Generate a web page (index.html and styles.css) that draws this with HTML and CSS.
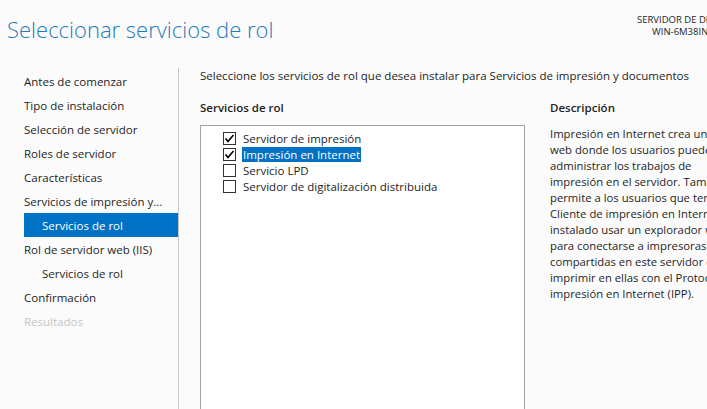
FILE: index.html
```html
<!DOCTYPE html>
<html lang="es">
<head>
<meta charset="utf-8">
<title>Seleccionar servicios de rol</title>
<link rel="stylesheet" href="styles.css">
</head>
<body>
<div class="window">
  <header class="header">
    <h1 class="title">Seleccionar servicios de rol</h1>
    <div class="server">
      <div class="server-label">SERVIDOR DE DESTINO</div>
      <div class="server-name">WIN-6M38IN</div>
    </div>
  </header>
  <div class="content">
    <nav class="sidebar">
      <ul class="steps">
        <li class="step">Antes de comenzar</li>
        <li class="step">Tipo de instalación</li>
        <li class="step">Selección de servidor</li>
        <li class="step">Roles de servidor</li>
        <li class="step">Características</li>
        <li class="step">Servicios de impresión y...</li>
        <li class="step sub active">Servicios de rol</li>
        <li class="step">Rol de servidor web (IIS)</li>
        <li class="step sub">Servicios de rol</li>
        <li class="step">Confirmación</li>
        <li class="step disabled">Resultados</li>
      </ul>
    </nav>
    <main class="main">
      <p class="intro">Seleccione los servicios de rol que desea instalar para Servicios de impresión y documentos</p>
      <div class="columns">
        <section class="roles">
          <h2 class="heading">Servicios de rol</h2>
          <div class="listbox">
            <div class="item">
              <span class="check checked"><svg viewBox="0 0 13 13" width="13" height="13"><path d="M2.5 6.5 L5 9.5 L10.5 3" fill="none" stroke="#000" stroke-width="1.6"/></svg></span>
              <span class="label">Servidor de impresión</span>
            </div>
            <div class="item">
              <span class="check checked"><svg viewBox="0 0 13 13" width="13" height="13"><path d="M2.5 6.5 L5 9.5 L10.5 3" fill="none" stroke="#000" stroke-width="1.6"/></svg></span>
              <span class="label selected">Impresión en Internet</span>
            </div>
            <div class="item">
              <span class="check"></span>
              <span class="label">Servicio LPD</span>
            </div>
            <div class="item">
              <span class="check"></span>
              <span class="label">Servidor de digitalización distribuida</span>
            </div>
          </div>
        </section>
        <section class="description">
          <h2 class="heading">Descripción</h2>
          <p class="desc-text">Impresión en Internet crea un sitio<br>web donde los usuarios pueden<br>administrar los trabajos de<br>impresión en el servidor. También<br>permite a los usuarios que tengan el<br>Cliente de impresión en Internet<br>instalado usar un explorador web<br>para conectarse a impresoras<br>compartidas en este servidor e<br>imprimir en ellas con el Protocolo de<br>impresión en Internet (IPP).</p>
        </section>
      </div>
    </main>
  </div>
</div>
</body>
</html>
```

FILE: styles.css
```css
* { box-sizing: border-box; }

html, body {
  margin: 0;
  padding: 0;
  background: #fbfbfb;
  overflow: hidden;
}

body {
  font-family: "Open Sans", "Noto Sans", "DejaVu Sans", sans-serif;
  font-size: 11.5px;
  color: #1e1e1e;
  width: 707px;
  height: 409px;
}

.window {
  width: 707px;
  height: 409px;
  overflow: hidden;
}

.header {
  height: 68px;
  display: flex;
  justify-content: space-between;
  align-items: flex-start;
}

.title {
  margin: 14px 0 0 7px;
  font-size: 22px;
  font-weight: 300;
  color: #1f7ab9;
  line-height: 30px;
  white-space: nowrap;
}

.server {
  margin-top: 14px;
  width: 70px;
  font-size: 9.5px;
  line-height: 12px;
  white-space: nowrap;
  color: #1e1e1e;
}

.server-name {
  padding-left: 15px;
}

.content {
  display: flex;
  height: 341px;
}

.sidebar {
  width: 179px;
  flex: none;
  border-right: 1px solid #c6c6c6;
  padding: 1px 0 0 24px;
}

.steps {
  list-style: none;
  margin: 0;
  padding: 0;
}

.step {
  height: 24px;
  padding-top: 3px;
  line-height: 20px;
  white-space: nowrap;
  color: #1e1e1e;
}

.step.sub {
  padding-left: 18px;
}

.step.active {
  background: #0072c6;
  color: #ffffff;
}

.step.disabled {
  color: #c4c4c4;
}

.main {
  padding-left: 21px;
  flex: 1;
  min-width: 0;
}

.intro {
  margin: 0;
  line-height: 16px;
  height: 15px;
  white-space: nowrap;
}

.columns {
  display: flex;
  gap: 25px;
  margin-top: 17px;
}

.roles {
  width: 325px;
  flex: none;
}

.heading {
  margin: 0;
  font-size: 11.5px;
  font-weight: 600;
  line-height: 16px;
  white-space: nowrap;
}

.listbox {
  margin-top: 9px;
  height: 300px;
  border: 1px solid #a3a3a3;
  background: #ffffff;
  padding: 4px 0 0 22px;
}

.item {
  display: flex;
  align-items: center;
  height: 16px;
  gap: 6px;
}

.check {
  width: 13px;
  height: 13px;
  flex: none;
  border: 1px solid #333333;
  background: #ffffff;
  position: relative;
}

.check svg {
  position: absolute;
  left: -1px;
  top: -1px;
}

.label {
  padding: 0 1px;
  line-height: 15px;
  white-space: nowrap;
}

.label.selected {
  background: #0072c6;
  color: #ffffff;
}

.description {
  flex: none;
  width: 200px;
}

.desc-text {
  margin: 10px 0 0;
  line-height: 16px;
  white-space: nowrap;
  font-size: 11.3px;
}
```
